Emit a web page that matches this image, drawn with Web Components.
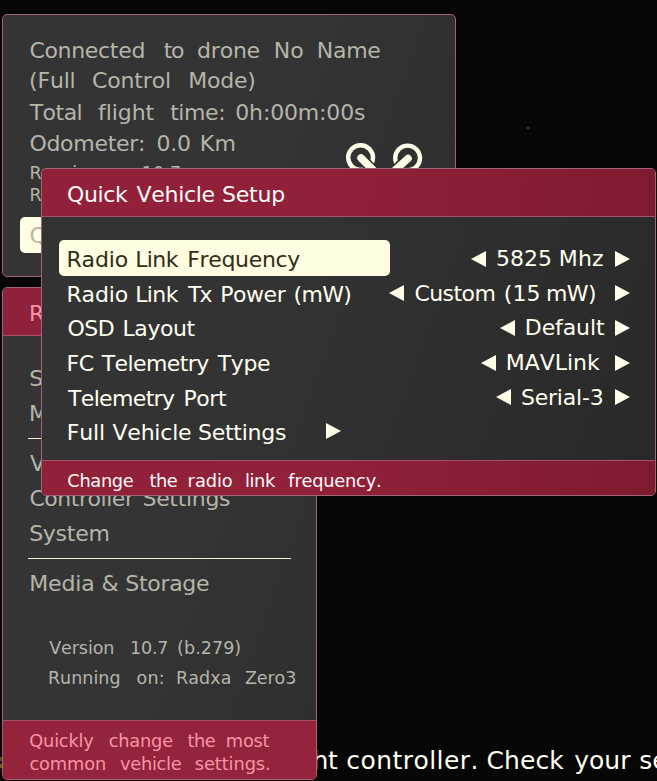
<!DOCTYPE html>
<html lang="en"><head><meta charset="utf-8"><title>Quick Vehicle Setup</title>
<style>
html,body{margin:0;height:781px;overflow:hidden;background:#070707}
body{position:relative;font-family:"DejaVu Sans",sans-serif;font-size:22px;color:#fffff0}
osd-window{position:absolute}
#status{left:2px;top:14px;width:454px;height:263px;color:#b5b5a9}
#main{left:2px;top:287px;width:315px;height:493px;color:#b5b5a9;--head:#90213a;--foot:#94233c;--foot-h:58px;--title:#f895a5}
#setup{left:41px;top:168px;width:615px;height:328px;--head:linear-gradient(100deg,#902139 45%,#7e1b2f);--foot:linear-gradient(100deg,#902139 45%,#7e1b2f);--foot-h:34px;--panel:linear-gradient(110deg,#333 35%,#292929);--title:#fffafa}
#message{position:absolute;left:270px;top:746px;width:387px;overflow:hidden;font-size:25px}
#spark{position:absolute;left:527px;top:127px;width:2px;height:2px;background:#3b3b3b}
#warn{position:absolute;left:0;top:757px;width:2px;height:15px;background:linear-gradient(#5c5212 30%,#111 30% 50%,#6b5d12 50% 75%,#15120a 75%)}
.small{font-size:17.5px}
</style></head><body>
<div id="spark"></div><div id="warn"></div>
<div id="message"><osd-text h="30" at="274.5-337.7 347-476 487.3-564 574.3-630.7 640-737">flight controller. Check your settings</osd-text></div>

<osd-window id="status">
  <osd-space h="20.3"></osd-space>
  <osd-text h="31.2" at="30-143.7 163.7-183.7 197.7-259.3 275.3-302.7 318.3-380">Connected to drone No Name</osd-text>
  <osd-text h="30.7" at="30.3-74 92.7-169.3 189.7-254.3">(Full Control Mode)</osd-text>
  <osd-text h="31" at="29-81 98-154 170-223.3 236-364.7">Total flight time: 0h:00m:00s</osd-text>
  <osd-text h="31.9" at="30-143.3 157.3-190 201.3-234.3">Odometer: 0.0 Km</osd-text>
  <osd-space h="1.9"></osd-space>
  <osd-text class="small" h="22" at="30.5-97 107-133 143-180">Running ver: 10.7</osd-text>
  <osd-text class="small" h="22" at="30.5-100">Running</osd-text>
  <osd-space h="11"></osd-space>
  <osd-choice>Quick</osd-choice>
  <link-rings></link-rings>
</osd-window>

<osd-window id="main">
  <osd-text slot="title" h="47" style="padding-top:2px;margin-bottom:-2px" at="30.5-90">Ruby</osd-text>
  <osd-space h="25"></osd-space>
  <osd-text h="35" at="30-100">Search</osd-text>
  <osd-text h="35" at="30.5-85">Model</osd-text>
  <osd-rule></osd-rule>
  <osd-text h="35" at="29.5-104">Vehicle</osd-text>
  <osd-text h="35" at="30-134.3 143.3-229.7">Controller Settings</osd-text>
  <osd-text h="35" at="30-108.3">System</osd-text>
  <osd-rule></osd-rule>
  <osd-text h="35" at="30.7-93 102.3-117.7 126-208.7">Media &amp; Storage</osd-text>
  <osd-space h="31.5"></osd-space>
  <osd-text class="small" h="30" at="48.7-113.3 131.3-167.3 178-240">Version 10.7 (b.279)</osd-text>
  <osd-text class="small" h="30" at="49-119.3 136.7-163 177-230.3 245-295.3">Running on: Radxa Zero3</osd-text>
  <osd-text slot="foot" h="22.5" at="29.7-93.7 109-172.7 187.3-215.3 227-269.7">Quickly change the most</osd-text>
  <osd-text slot="foot" h="22.5" at="29.7-105.3 120-181.3 195.3-269.3">common vehicle settings.</osd-text>
</osd-window>

<osd-window id="setup">
  <osd-text slot="title" h="47" style="padding-top:2px;margin-bottom:-2px" at="67.7-128 136-214.3 222.7-284.3">Quick Vehicle Setup</osd-text>
  <osd-space h="24"></osd-space>
  <osd-option selected label="Radio Link Frequency" at="68-127.3 136.7-178.7 188.7-300" value="5825 Mhz" vat="497-550.3 560.3-603" w="129"></osd-option>
  <osd-option label="Radio Link Tx Power (mW)" at="68-127.3 136.7-178.7 187.3-212 221.7-286 294.7-350.3" value="Custom (15 mW)" vat="415-494.3 505-539 547.3-595" w="211"></osd-option>
  <osd-option label="OSD Layout" at="68-113.7 124-195" value="Default" vat="526.3-604.3" w="100"></osd-option>
  <osd-option label="FC Telemetry Type" at="68-93.3 101-209 217-269.7" value="MAVLink" vat="507.3-600" w="119"></osd-option>
  <osd-option label="Telemetry Port" at="67.3-174.7 185-226.3" value="Serial-3" vat="521.7-602.3" w="104"></osd-option>
  <osd-option label="Full Vehicle Settings" at="68.3-103.3 112-190.7 198.7-285.7"></osd-option>
  <osd-text slot="foot" h="30" at="67.7-133.3 149.3-177.3 188.7-232.3 246-275.7 288.3-380.3">Change the radio link frequency.</osd-text>
</osd-window>

<script>
const shadow=(el,html)=>{const r=el.attachShadow({mode:'open'});r.innerHTML=html;return r};

// Framed panel with optional title bar and footer bar.
class OsdWindow extends HTMLElement{
  connectedCallback(){
    const t=this.querySelector('[slot=title]'),f=this.querySelector('[slot=foot]');
    shadow(this,`<style>
      :host{box-sizing:border-box;border:1px solid #a0637a;border-radius:5px;display:flex;flex-direction:column;overflow:hidden;background:var(--panel,linear-gradient(110deg,#343434 55%,#2e2e2e))}
      header{flex:none;height:47px;background:var(--head);color:var(--title);border-bottom:1px solid #a85068}
      main{flex:1;min-height:0;position:relative}
      footer{box-sizing:border-box;height:calc(var(--foot-h) + 1px);flex:none;background:var(--foot);color:var(--title);border-top:1px solid #a85068;display:flex;flex-direction:column;justify-content:center;padding-top:5px;font-size:17.8px}
    </style>${t?'<header><slot name="title"></slot></header>':''}<main><slot></slot></main>${f?'<footer><slot name="foot"></slot></footer>':''}`);
  }
}
class OsdSpace extends HTMLElement{
  connectedCallback(){shadow(this,`<style>:host{display:block;height:${this.getAttribute('h')}px}</style>`)}
}
class OsdRule extends HTMLElement{
  connectedCallback(){shadow(this,`<style>:host{display:flex;align-items:center;height:15px;padding:0 25px}i{flex:1;height:1px;background:#f5f3d5}</style><i></i>`)}
}
class OsdChoice extends HTMLElement{
  connectedCallback(){shadow(this,`<style>:host{display:block;margin-left:17px;width:330px;height:36px;border-radius:5px;background:#fffde3;color:#bdb59f}</style><osd-text h="37" at="30-90">${this.textContent}</osd-text>`);}
}
class OsdArrow extends HTMLElement{
  connectedCallback(){
    const d=this.getAttribute('dir')==='left'?'M15 0V16L0 8Z':'M0 0V16L15 8Z';
    shadow(this,`<style>:host{display:block;flex:none;width:15px;height:16px}svg{display:block}</style><svg width="15" height="16"><path d="${d}" fill="#fffde8"/></svg>`);
  }
}
class OsdOption extends HTMLElement{
  connectedCallback(){
    const a=n=>this.getAttribute(n),sel=this.hasAttribute('selected');
    shadow(this,`<style>
      :host{display:flex;height:34.6px;align-items:center;padding:0 25px 0 17px}
      .label{flex:none;width:331px;height:36px;border-radius:5px;${sel?'background:#fffde1;color:#302d1b':''}}
      .value{flex:1;display:flex;justify-content:flex-end;align-items:center;margin-left:-40px;padding-top:1px}
      .value osd-text{flex:none;width:${a('w')}px}
      .sub{margin:0 0 0 -64px}
    </style><div class="label"><osd-text h="39.4" at="${a('at')}">${a('label')}</osd-text></div>
    ${a('value')?`<div class="value"><osd-arrow dir="left"></osd-arrow><osd-text h="34" style="padding-top:1px" at="${a('vat')}">${a('value')}</osd-text><osd-arrow></osd-arrow></div>`:'<osd-arrow class="sub"></osd-arrow>'}`);
  }
}
class LinkRings extends HTMLElement{
  connectedCallback(){shadow(this,`<style>:host{position:absolute;left:337px;top:125px}svg{display:block}</style>
    <svg width="90" height="40" viewBox="340 140 90 40" fill="none" stroke="#fffde8"><circle cx="360.6" cy="157.6" r="12.4" stroke-width="4.4"/><circle cx="407.6" cy="158" r="12.4" stroke-width="4.4"/><path d="M366 163L380 178M402 164L388 178" stroke="#31312f" stroke-width="11"/><path d="M361 158L377 174M408 158.5L392 173" stroke-width="7.5" stroke-linecap="round"/></svg>`)}
}
// Line of words; each word occupies the horizontal extent listed in "at".
class OsdText extends HTMLElement{
  connectedCallback(){
    const h=this.getAttribute('h');
    const r=shadow(this,`<style>:host{display:block;height:${h}px;line-height:${h}px;white-space:pre;font-kerning:none;font-variant-ligatures:none}</style>`);
    const words=this.textContent.trim().split(/\s+/);
    const at=this.getAttribute('at').split(' ').map(s=>{const [a,b]=s.split('-').map(Number);return [a+.6,b-.3]});
    const cs=getComputedStyle(this),c=document.createElement('canvas').getContext('2d');
    // Measured at ten times the size, since glyph bounds are rounded to whole pixels.
    c.font=`${parseFloat(cs.fontSize)*10}px ${cs.fontFamily}`;c.fontKerning='none';
    let pen=this.getBoundingClientRect().left;
    const space=c.measureText(' ').width/10;
    words.forEach((w,i)=>{
      const m=c.measureText(w),inkL=-m.actualBoundingBoxLeft/10,ink=(m.actualBoundingBoxRight+m.actualBoundingBoxLeft)/10;
      const ls=(at[i][1]-at[i][0]-ink)/Math.max(1,w.length-1),start=at[i][0]-inkL,s=document.createElement('span');
      if(i){const g=document.createElement('span');g.textContent=' ';g.style.letterSpacing=(start-pen-space)+'px';r.append(g)}
      else s.style.marginLeft=(start-pen)+'px';
      s.textContent=w;s.style.letterSpacing=ls+'px';r.append(s);
      pen=start+m.width/10+ls*w.length;
    });
  }
}
customElements.define('osd-window',OsdWindow);
customElements.define('osd-space',OsdSpace);
customElements.define('osd-rule',OsdRule);
customElements.define('osd-choice',OsdChoice);
customElements.define('osd-arrow',OsdArrow);
customElements.define('osd-option',OsdOption);
customElements.define('link-rings',LinkRings);
customElements.define('osd-text',OsdText);
</script>
</body></html>
